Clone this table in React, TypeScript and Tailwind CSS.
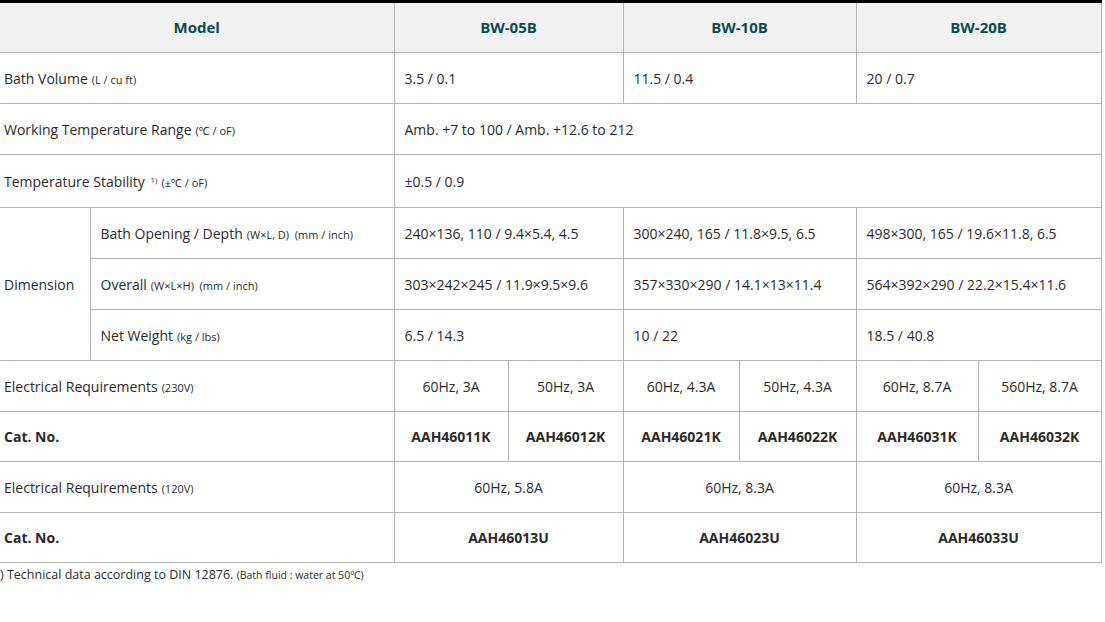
import React from "react";

const line = "border border-[#b4b4b4]";
const cell = `${line} h-[51px] px-[10px] text-left align-middle`;
const label = `${line} border-l-0 h-[51px] pl-[4px] text-left align-middle`;
const mid = `${line} h-[51px] text-center align-middle`;

function Unit({ children }: { children: React.ReactNode }) {
  return <span className="text-[11px] ml-[4px]">{children}</span>;
}

export default function App() {
  return (
    <div className="w-[1105px] h-[622px] bg-white text-[#2a2a2a] font-['Open_Sans','Noto_Sans',sans-serif] text-[14px]">
      <table className="w-[1101px] table-fixed border-collapse border-t-[3px] border-t-black">
        <colgroup>
          <col className="w-[90px]" />
          <col className="w-[304px]" />
          <col className="w-[114px]" />
          <col className="w-[115px]" />
          <col className="w-[116px]" />
          <col className="w-[117px]" />
          <col className="w-[122px]" />
          <col className="w-[123px]" />
        </colgroup>
        <tbody>
          <tr className="bg-[#f2f2f2] text-[#0b4d50] font-bold text-[15px]">
            <td colSpan={2} className={`${mid} border-l-0 !h-[51px] border-t-0`}>Model</td>
            <td colSpan={2} className={`${mid} !h-[51px] border-t-0`}>BW-05B</td>
            <td colSpan={2} className={`${mid} !h-[51px] border-t-0`}>BW-10B</td>
            <td colSpan={2} className={`${mid} !h-[51px] border-t-0`}>BW-20B</td>
          </tr>
          <tr>
            <td colSpan={2} className={label}>Bath Volume<Unit>(L / cu ft)</Unit></td>
            <td colSpan={2} className={cell}>3.5 / 0.1</td>
            <td colSpan={2} className={cell}>11.5 / 0.4</td>
            <td colSpan={2} className={cell}>20 / 0.7</td>
          </tr>
          <tr>
            <td colSpan={2} className={label}>Working Temperature Range<Unit>(℃ / oF)</Unit></td>
            <td colSpan={6} className={cell}>Amb. +7 to 100 / Amb. +12.6 to 212</td>
          </tr>
          <tr>
            <td colSpan={2} className={`${label} !h-[53px]`}>
              Temperature Stability <sup className="text-[8px] ml-[2px]">1)</sup>
              <Unit>(±℃ / oF)</Unit>
            </td>
            <td colSpan={6} className={`${cell} !h-[53px]`}>±0.5 / 0.9</td>
          </tr>
          <tr>
            <td rowSpan={3} className={label}>Dimension</td>
            <td className={cell}>Bath Opening / Depth<Unit>(W×L, D)&nbsp; (mm / inch)</Unit></td>
            <td colSpan={2} className={cell}>240×136, 110 / 9.4×5.4, 4.5</td>
            <td colSpan={2} className={cell}>300×240, 165 / 11.8×9.5, 6.5</td>
            <td colSpan={2} className={cell}>498×300, 165 / 19.6×11.8, 6.5</td>
          </tr>
          <tr>
            <td className={cell}>Overall<Unit>(W×L×H)&nbsp; (mm / inch)</Unit></td>
            <td colSpan={2} className={cell}>303×242×245 / 11.9×9.5×9.6</td>
            <td colSpan={2} className={cell}>357×330×290 / 14.1×13×11.4</td>
            <td colSpan={2} className={cell}>564×392×290 / 22.2×15.4×11.6</td>
          </tr>
          <tr>
            <td className={cell}>Net Weight<Unit>(kg / lbs)</Unit></td>
            <td colSpan={2} className={cell}>6.5 / 14.3</td>
            <td colSpan={2} className={cell}>10 / 22</td>
            <td colSpan={2} className={cell}>18.5 / 40.8</td>
          </tr>
          <tr>
            <td colSpan={2} className={label}>Electrical Requirements<Unit>(230V)</Unit></td>
            <td className={mid}>60Hz, 3A</td>
            <td className={mid}>50Hz, 3A</td>
            <td className={mid}>60Hz, 4.3A</td>
            <td className={mid}>50Hz, 4.3A</td>
            <td className={mid}>60Hz, 8.7A</td>
            <td className={mid}>560Hz, 8.7A</td>
          </tr>
          <tr className="font-bold">
            <td colSpan={2} className={`${label} !h-[50px]`}>Cat. No.</td>
            <td className={`${mid} !h-[50px]`}>AAH46011K</td>
            <td className={`${mid} !h-[50px]`}>AAH46012K</td>
            <td className={`${mid} !h-[50px]`}>AAH46021K</td>
            <td className={`${mid} !h-[50px]`}>AAH46022K</td>
            <td className={`${mid} !h-[50px]`}>AAH46031K</td>
            <td className={`${mid} !h-[50px]`}>AAH46032K</td>
          </tr>
          <tr>
            <td colSpan={2} className={label}>Electrical Requirements<Unit>(120V)</Unit></td>
            <td colSpan={2} className={mid}>60Hz, 5.8A</td>
            <td colSpan={2} className={mid}>60Hz, 8.3A</td>
            <td colSpan={2} className={mid}>60Hz, 8.3A</td>
          </tr>
          <tr className="font-bold">
            <td colSpan={2} className={`${label} !h-[50px]`}>Cat. No.</td>
            <td colSpan={2} className={`${mid} !h-[50px]`}>AAH46013U</td>
            <td colSpan={2} className={`${mid} !h-[50px]`}>AAH46023U</td>
            <td colSpan={2} className={`${mid} !h-[50px]`}>AAH46033U</td>
          </tr>
        </tbody>
      </table>
      <p className="mt-[4px] text-[12.5px] leading-[16px]">
        ) Technical data according to DIN 12876. <span className="text-[10.5px]">(Bath fluid : water at 50℃)</span>
      </p>
    </div>
  );
}
